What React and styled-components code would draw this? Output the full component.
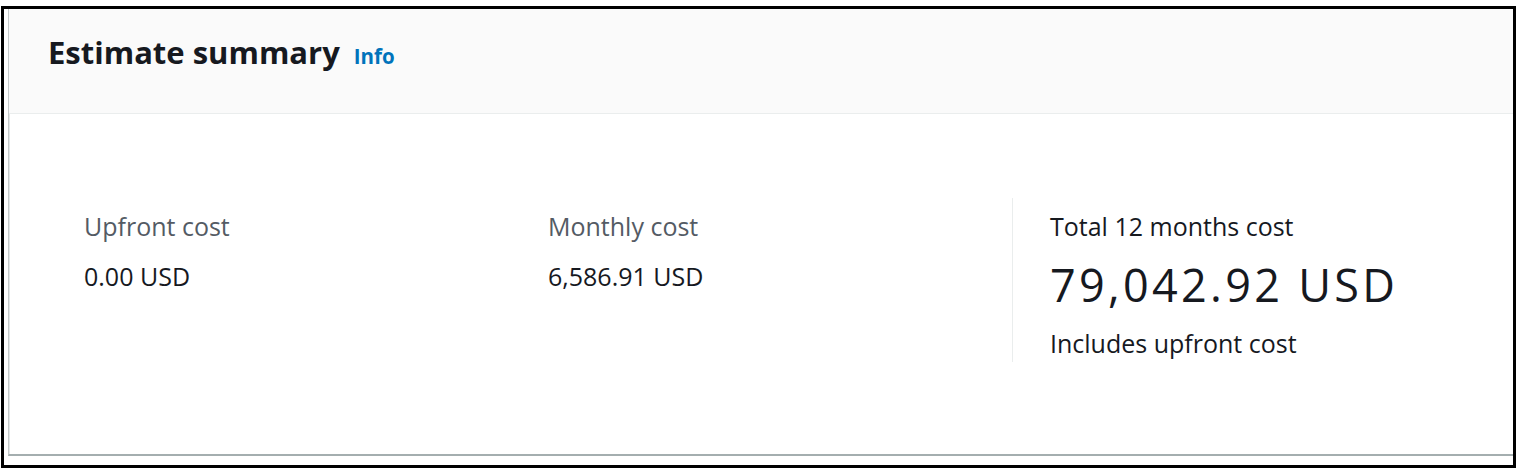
import React from 'react';
import styled, { createGlobalStyle } from 'styled-components';

const GlobalStyle = createGlobalStyle`
  body {
    margin: 0;
    background: #ffffff;
    font-family: "Open Sans", "Noto Sans", sans-serif;
  }
`;

const Frame = styled.div`
  margin: 6px 0 0 1px;
  width: 1515px;
  height: 462px;
  box-sizing: border-box;
  border: 3px solid #000;
  background: #f2f3f3;
  overflow: hidden;
  display: flex;
  flex-direction: column;
`;

const Page = styled.div`
  flex: 1;
  background: #fff;
  padding-left: 4px;
  display: flex;
`;

const Card = styled.section`
  flex: 1;
  display: flex;
  flex-direction: column;
  border-left: 1px solid #c4c9c9;
  border-bottom: 2px solid #a4aeaf;
  box-shadow: inset 1px 0 0 #e4e7e7;
  margin-bottom: 9px;
  background: #fff;
`;

const Header = styled.header`
  height: 105px;
  box-sizing: border-box;
  padding: 25px 0 0 39px;
  background: #fafafa;
  border-bottom: 1px solid #eaeded;
  display: flex;
  align-items: baseline;
  gap: 14px;
`;

const Title = styled.h2`
  margin: 0;
  font-size: 31px;
  line-height: 36px;
  font-weight: 700;
  color: #16191f;
`;

const InfoLink = styled.a`
  font-size: 20.5px;
  font-weight: 700;
  color: #0073bb;
  text-decoration: none;
`;

const Body = styled.div`
  flex: 1;
  padding: 84px 0 0 75px;
  display: grid;
  grid-template-columns: 464px 464px 1fr;
  align-items: start;
`;

const Column = styled.div`
  display: flex;
  flex-direction: column;
  padding: 13px 0 0 ${p => (p.divided ? '37px' : '0')};
  border-left: ${p => (p.divided ? '1px solid #eaeded' : 'none')};
  height: ${p => (p.divided ? '164px' : 'auto')};
  box-sizing: border-box;
`;

const Label = styled.div`
  font-size: 25px;
  line-height: 30px;
  color: ${p => (p.strong ? '#16191f' : '#545b64')};
`;

const Value = styled.div`
  margin-top: 20px;
  font-size: 25px;
  line-height: 30px;
  color: #16191f;
`;

const BigValue = styled.div`
  margin-top: 19px;
  font-size: 45px;
  line-height: 50px;
  letter-spacing: 3.3px;
  color: #16191f;
`;

const Note = styled.div`
  margin-top: 18px;
  font-size: 25px;
  line-height: 30px;
  color: #16191f;
`;

export default function App() {
  return (
    <>
      <GlobalStyle />
      <Frame>
        <Page>
          <Card>
            <Header>
              <Title>Estimate summary</Title>
              <InfoLink href="#">Info</InfoLink>
            </Header>
            <Body>
              <Column>
                <Label>Upfront cost</Label>
                <Value>0.00 USD</Value>
              </Column>
              <Column>
                <Label>Monthly cost</Label>
                <Value>6,586.91 USD</Value>
              </Column>
              <Column divided>
                <Label strong>Total 12 months cost</Label>
                <BigValue>79,042.92 USD</BigValue>
                <Note>Includes upfront cost</Note>
              </Column>
            </Body>
          </Card>
        </Page>
      </Frame>
    </>
  );
}
